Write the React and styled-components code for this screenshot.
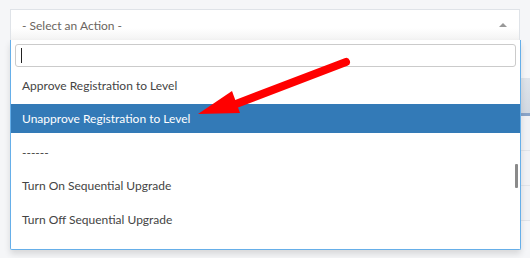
import React from 'react'
import styled, { createGlobalStyle } from 'styled-components'

const GlobalStyle = createGlobalStyle`
    html, body {
        margin: 0;
        padding: 0;
        background: #f5f6f8;
        font-family: Lato, "Open Sans", sans-serif;
        overflow: hidden;
    }
`;

const Page = styled.div`
    position: relative;
    width: 530px;
    height: 258px;
    padding: 9px 0 0 10px;
    box-sizing: border-box;
`;

const Select = styled.div`
    width: 510px;
    height: 31px;
    box-sizing: border-box;
    border: 1px solid #dfe3e8;
    border-bottom: none;
    background: linear-gradient(to bottom, #fff 0%, #fff 60%, #f3f3f3 100%);
    display: flex;
    align-items: center;
    justify-content: space-between;
    padding: 0 12px 0 11px;
    color: #6b6560;
    font-size: 12px;
`;

const Arrow = styled.span`
    width: 0;
    height: 0;
    border-left: 4px solid transparent;
    border-right: 4px solid transparent;
    border-bottom: 4px solid #999;
    margin-top: -1px;
`;

const Table = styled.div`
    margin-top: 38px;
    width: 540px;
`;

const HeadRow = styled.div`
    height: 35px;
    background: linear-gradient(to bottom, #dfe4ea, #d2d9e2);
    border-bottom: 3px solid #8aa4c8;
`;

const BodyRow = styled.div`
    height: 34px;
    border-bottom: 1px solid #e1e4e9;
    background: #f1f2f5;
`;

const Dropdown = styled.div`
    position: absolute;
    top: 40px;
    left: 10px;
    width: 511px;
    height: 210px;
    box-sizing: border-box;
    background: #fff;
    border: 1px solid #66afe9;
    border-top: none;
    border-radius: 0 0 2px 2px;
    box-shadow: 0 4px 6px rgba(0, 0, 0, 0.12);
    padding: 4px 4px 0 4px;
`;

const Search = styled.div`
    height: 23px;
    box-sizing: border-box;
    border: 1px solid #cbcbcb;
    border-radius: 3px;
    display: flex;
    align-items: center;
    padding-left: 5px;
`;

const Caret = styled.span`
    width: 1px;
    height: 15px;
    background: #222;
`;

const List = styled.div`
    position: relative;
    margin: 3.5px -4px 0 -4px;
    display: flex;
    flex-direction: column;
    gap: 4.5px;
`;

const Option = styled.div`
    height: 29px;
    display: flex;
    align-items: center;
    padding-left: 11px;
    font-size: 12px;
    color: ${(props) => (props.active ? '#fff' : '#444')};
    background: ${(props) => (props.active ? '#337ab7' : 'transparent')};
`;

const Scrollbar = styled.div`
    position: absolute;
    right: 2px;
    top: 93px;
    width: 3px;
    height: 24px;
    background: #8a8a8a;
    border-radius: 1px;
`;

const Pointer = styled.svg`
    position: absolute;
    left: 0;
    top: 0;
    pointer-events: none;
`;

const options = [
    'Approve Registration to Level',
    'Unapprove Registration to Level',
    '------',
    'Turn On Sequential Upgrade',
    'Turn Off Sequential Upgrade',
];

export default function App() {
    return (
        <Page>
            <GlobalStyle />
            <Select>
                <span>- Select an Action -</span>
                <Arrow />
            </Select>
            <Table>
                <HeadRow />
                <BodyRow />
                <BodyRow />
                <BodyRow />
            </Table>
            <Dropdown>
                <Search>
                    <Caret />
                </Search>
                <List>
                    {options.map((o, i) => (
                        <Option key={o} active={i === 1}>{o}</Option>
                    ))}
                    <Scrollbar />
                </List>
            </Dropdown>
            <Pointer width="530" height="258">
                <line x1="346" y1="62" x2="236" y2="104" stroke="#ff0000" strokeWidth="8" strokeLinecap="round" />
                <polygon points="198,114 232,91 240,113" fill="#ff0000" />
            </Pointer>
        </Page>
    );
}
